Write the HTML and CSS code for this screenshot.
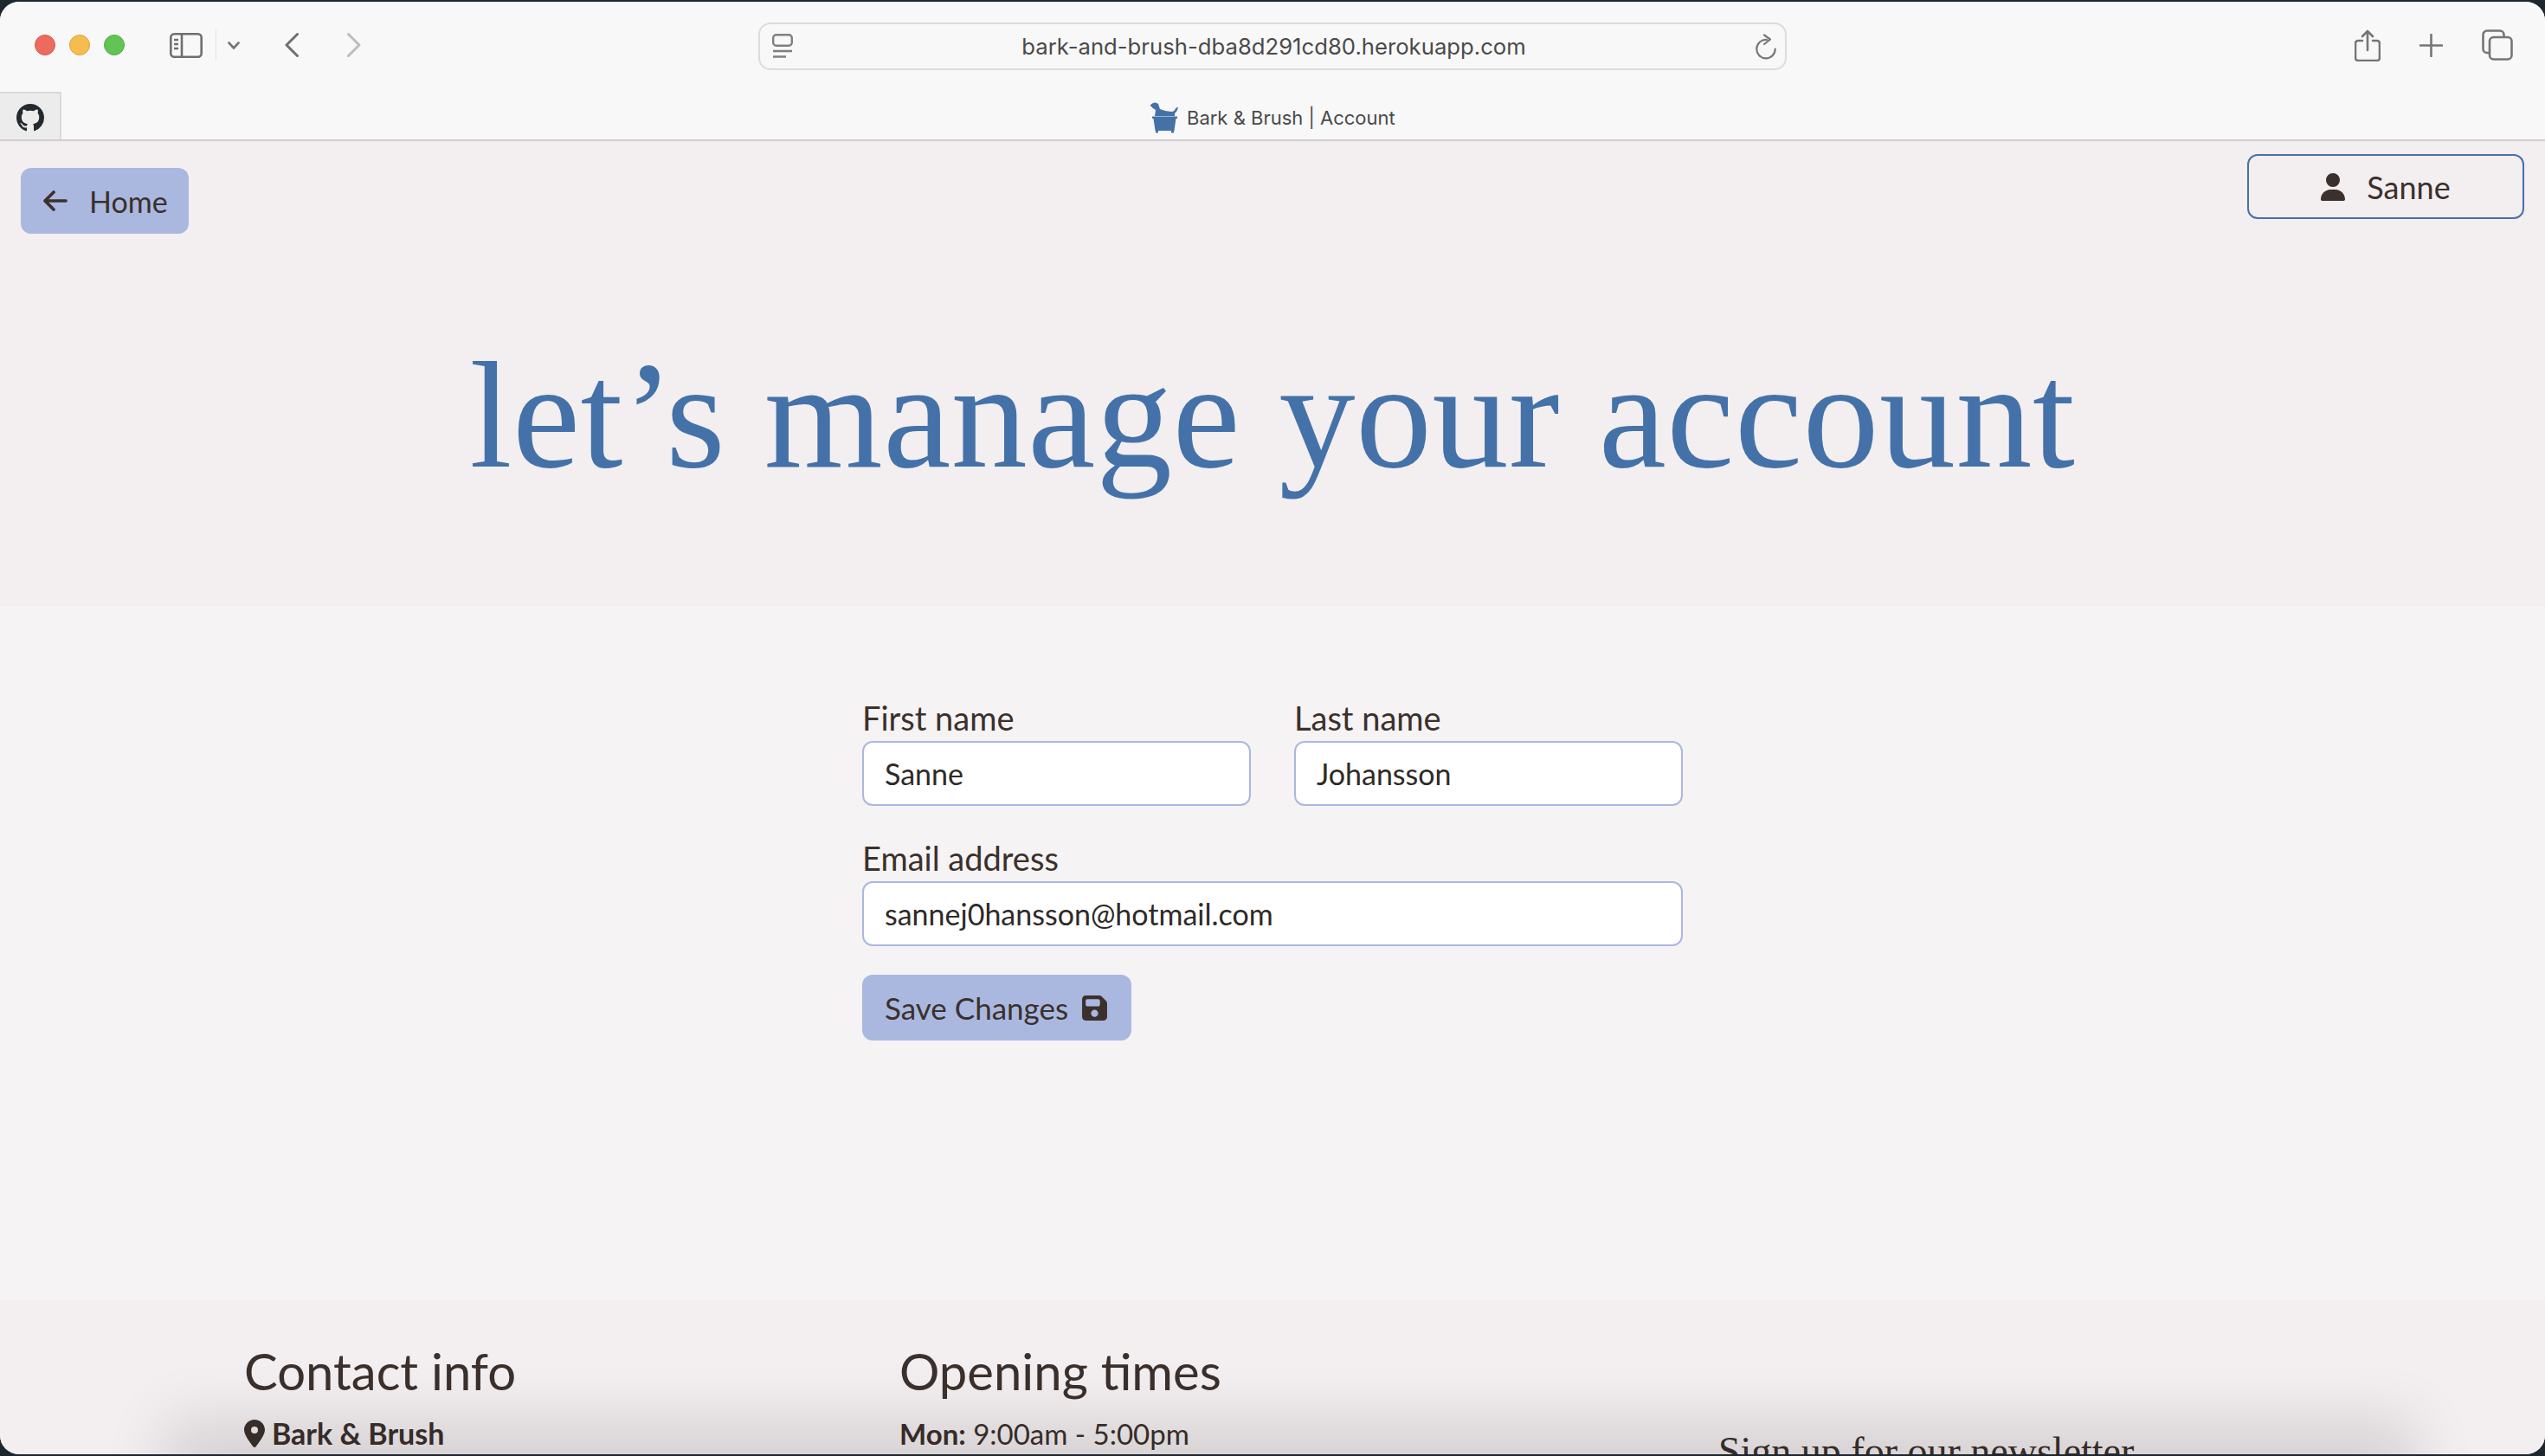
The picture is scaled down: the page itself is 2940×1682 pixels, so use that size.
FILE: index.html
```html
<!DOCTYPE html>
<html lang="en">

<head>
    <meta charset="UTF-8" />
    <title>Bark &amp; Brush | Account</title>
    <link rel="stylesheet" href="styles.css">
</head>

<body>
    <div class="window">

        <header class="chrome">
            <div class="toolbar">
                <div class="lights">
                    <span class="light red"></span>
                    <span class="light yellow"></span>
                    <span class="light green"></span>
                </div>
                <svg class="ico sidebar-ico" viewBox="0 0 38 29" fill="none" stroke="#6f6f6f" stroke-width="2.6">
                    <rect x="1.3" y="1.3" width="35.4" height="26.4" rx="4" />
                    <path d="M14 1.3v26.4M5 8h5M5 13h5M5 18h5" />
                </svg>
                <span class="divider"></span>
                <svg class="ico chevron-ico" viewBox="0 0 14 9" fill="none" stroke="#777" stroke-width="2.6" stroke-linecap="round" stroke-linejoin="round">
                    <path d="M1.5 1.5 7 7.5l5.5-6" />
                </svg>
                <svg class="ico back-ico" viewBox="0 0 16 28" fill="none" stroke="#6f6f6f" stroke-width="3" stroke-linecap="round" stroke-linejoin="round">
                    <path d="M14.5 1.5 2 14l12.5 12.5" />
                </svg>
                <svg class="ico forward-ico" viewBox="0 0 16 28" fill="none" stroke="#bdbdbd" stroke-width="3" stroke-linecap="round" stroke-linejoin="round">
                    <path d="M1.5 1.5 14 14 1.5 26.5" />
                </svg>

                <div class="urlbar">
                    <svg class="ico reader-ico" viewBox="0 0 24 28" fill="none" stroke="#808080" stroke-width="2.4">
                        <rect x="1.2" y="1.2" width="21.6" height="12.6" rx="3.5" />
                        <path d="M1 20h22M1 26.5h15" />
                    </svg>
                    <span class="url">bark-and-brush-dba8d291cd80.herokuapp.com</span>
                    <svg class="ico reload-ico" viewBox="14 8 32 32" fill="none" stroke="#777" stroke-width="2.2" stroke-linecap="round" stroke-linejoin="round">
                        <path d="M31 17A10.7 10.7 0 1 0 40.7 27.5" />
                        <path d="M28 11.5 35 16.5 28 22" />
                    </svg>
                </div>

                <div class="toolbar-right">
                    <svg class="ico share-ico" viewBox="0 0 30 37" fill="none" stroke="#757575" stroke-width="2.6" stroke-linecap="round" stroke-linejoin="round">
                        <path d="M9 13H4a3 3 0 0 0-3 3v17a3 3 0 0 0 3 3h22a3 3 0 0 0 3-3V16a3 3 0 0 0-3-3h-5" />
                        <path d="M15 24V2M9 8l6-6 6 6" />
                    </svg>
                    <svg class="ico plus-ico" viewBox="0 0 27 27" fill="none" stroke="#757575" stroke-width="2.6" stroke-linecap="round">
                        <path d="M13.5 1v25M1 13.5h25" />
                    </svg>
                    <svg class="ico tabs-ico" viewBox="0 0 36 36" fill="none" stroke="#757575" stroke-width="2.6">
                        <path d="M8 27H6a4.5 4.5 0 0 1-4.5-4.5V6A4.5 4.5 0 0 1 6 1.5h15A4.5 4.5 0 0 1 25.5 6v2" />
                        <rect x="9" y="9" width="25.5" height="25.5" rx="4.5" />
                    </svg>
                </div>
            </div>

            <div class="tabrow">
                <div class="pinned-tab">
                    <svg class="github-ico" viewBox="0 0 16 16" fill="#24292f">
                        <path d="M8 0C3.58 0 0 3.58 0 8c0 3.54 2.29 6.53 5.47 7.59.4.07.55-.17.55-.38 0-.19-.01-.82-.01-1.49-2.01.37-2.53-.49-2.69-.94-.09-.23-.48-.94-.82-1.13-.28-.15-.68-.52-.01-.53.63-.01 1.08.58 1.23.82.72 1.21 1.87.87 2.33.66.07-.52.28-.87.51-1.07-1.78-.2-3.64-.89-3.64-3.95 0-.87.31-1.59.82-2.15-.08-.2-.36-1.02.08-2.12 0 0 .67-.21 2.2.82.64-.18 1.32-.27 2-.27.68 0 1.36.09 2 .27 1.53-1.04 2.2-.82 2.2-.82.44 1.1.16 1.92.08 2.12.51.56.82 1.27.82 2.15 0 3.07-1.87 3.75-3.65 3.95.29.25.54.73.54 1.48 0 1.07-.01 1.93-.01 2.2 0 .21.15.46.55.38A8.013 8.013 0 0016 8c0-4.42-3.58-8-8-8z" />
                    </svg>
                </div>
                <div class="tab-title">
                    <svg class="favicon" viewBox="8 5 34 37" fill="#4472a8">
                        <path d="M8.5 9.5 12 7Q15 5.5 18 8L20 14Q27 17 33 17 37 17 38 13L41 11.5Q40 17 37 19V22H14L15 15Q11 13 8.5 9.5Z" />
                        <path d="M11 22.5H40V25H38.5L36.5 39H14.5L12.5 25H11Z" />
                        <path d="M15 39H18V41.5H15ZM33 39H36V41.5H33Z" />
                    </svg>
                    <span>Bark &amp; Brush | Account</span>
                </div>
            </div>
        </header>

        <section class="hero">
            <div class="hero-nav">
                <a class="btn btn-home" href="#">
                    <svg class="arrow-ico" viewBox="0 0 28 24" fill="none" stroke="#3b302c" stroke-width="3.6" stroke-linecap="round" stroke-linejoin="round">
                        <path d="M26 12H2M12 2 2 12l10 10" />
                    </svg>
                    Home
                </a>
                <a class="btn btn-user" href="#">
                    <svg class="user-ico" viewBox="0 0 448 512" fill="#3b302c">
                        <path d="M224 256A128 128 0 1 0 224 0a128 128 0 1 0 0 256zm-45.7 48C79.8 304 0 383.8 0 482.3C0 498.7 13.3 512 29.7 512H418.3c16.4 0 29.7-13.3 29.7-29.7C448 383.8 368.2 304 269.7 304H178.3z" />
                    </svg>
                    Sanne
                </a>
            </div>
            <h1>let’s manage your account</h1>
        </section>

        <main class="content">
            <form class="account-form">
                <div class="field">
                    <label for="first">First name</label>
                    <input type="text" id="first" value="Sanne" />
                </div>
                <div class="field">
                    <label for="last">Last name</label>
                    <input type="text" id="last" value="Johansson" />
                </div>
                <div class="field wide">
                    <label for="email">Email address</label>
                    <input type="text" id="email" value="sannej0hansson@hotmail.com" />
                </div>
                <button class="btn btn-save" type="button">
                    Save Changes
                    <svg class="save-ico" viewBox="0 0 448 512" fill="#3b302c">
                        <path d="M64 32C28.7 32 0 60.7 0 96V416c0 35.3 28.7 64 64 64H384c35.3 0 64-28.7 64-64V173.3c0-17-6.7-33.3-18.7-45.3L352 50.7C340 38.7 323.7 32 306.7 32H64zm0 96c0-17.7 14.3-32 32-32H288c17.7 0 32 14.3 32 32v64c0 17.7-14.3 32-32 32H96c-17.7 0-32-14.3-32-32V128zM224 288a64 64 0 1 1 0 128 64 64 0 1 1 0-128z" />
                    </svg>
                </button>
            </form>
        </main>

        <footer class="footer">
            <div class="footer-col">
                <h2>Contact info</h2>
                <p class="strong">
                    <svg class="pin-ico" viewBox="0 0 384 512" fill="#3b302c">
                        <path d="M215.7 499.2C267 435 384 279.4 384 192C384 86 298 0 192 0S0 86 0 192c0 87.4 117 243 168.3 307.2c12.3 15.3 35.1 15.3 47.4 0zM192 128a64 64 0 1 1 0 128 64 64 0 1 1 0-128z" />
                    </svg>
                    Bark &amp; Brush
                </p>
            </div>
            <div class="footer-col">
                <h2>Opening times</h2>
                <p class="hours"><strong>Mon:</strong> 9:00am - 5:00pm</p>
            </div>
            <div class="footer-col newsletter">
                <h3>Sign up for our newsletter</h3>
            </div>
        </footer>

        <div class="dock-shadow"></div>
    </div>
</body>

</html>
```

FILE: styles.css
```css
* {
    box-sizing: border-box;
}

html,
body {
    height: 100%;
    margin: 0;
}

body {
    background-color: #1d2730;
    font-family: "Lato", sans-serif;
    color: #3b302c;
    overflow: hidden;
}

.window {
    position: relative;
    height: 1678px;
    margin-top: 2px;
    border-radius: 22px;
    overflow: hidden;
    display: flex;
    flex-direction: column;
    background-color: #f3eef0;
}

/* browser bar */
.chrome {
    height: 161px;
    flex-shrink: 0;
    background-color: #f8f8f8;
    border-bottom: 2px solid #d2cecf;
    display: flex;
    flex-direction: column;
}

.toolbar {
    height: 104px;
    display: flex;
    align-items: center;
    padding-bottom: 4px;
    padding-left: 40px;
}

.ico {
    display: block;
    flex-shrink: 0;
}

.lights {
    display: flex;
    gap: 16px;
}

.light {
    width: 24px;
    height: 24px;
    border-radius: 50%;
}

.red {
    background-color: #ee6a5f;
    border: 1px solid #d9584f;
}

.yellow {
    background-color: #f5bd4f;
    border: 1px solid #dca23c;
}

.green {
    background-color: #61c454;
    border: 1px solid #52ad45;
}

.sidebar-ico {
    width: 38px;
    height: 29px;
    margin-left: 52px;
}

.divider {
    width: 1px;
    height: 36px;
    background-color: #e2e2e2;
    margin-left: 15px;
}

.chevron-ico {
    width: 14px;
    height: 9px;
    margin-left: 13px;
}

.back-ico {
    width: 16px;
    height: 28px;
    margin-left: 52px;
}

.forward-ico {
    width: 16px;
    height: 28px;
    margin-left: 56px;
}

.urlbar {
    width: 1188px;
    height: 55px;
    margin-left: 459px;
    margin-top: 2px;
    border: 2px solid #dcdcdc;
    border-radius: 14px;
    display: flex;
    align-items: center;
    justify-content: space-between;
    padding: 0 6px 0 14px;
}

.reader-ico {
    width: 24px;
    height: 28px;
}

.url {
    font-family: "Inter", sans-serif;
    font-size: 25.7px;
    color: #4a4a4a;
    margin-left: 3px;
}

.reload-ico {
    width: 32px;
    height: 32px;
}

.toolbar-right {
    display: flex;
    align-items: center;
    margin-left: 656px;
    gap: 45px;
}

.share-ico {
    width: 30px;
    height: 37px;
}

.plus-ico {
    width: 27px;
    height: 27px;
}

.tabs-ico {
    width: 36px;
    height: 36px;
}

.tabrow {
    flex: 1;
    display: flex;
    position: relative;
}

.pinned-tab {
    width: 71px;
    background-color: #ececec;
    border-top: 2px solid #dadada;
    border-right: 2px solid #dadada;
    display: flex;
    align-items: center;
    justify-content: center;
    padding-top: 2px;
}

.github-ico {
    width: 32px;
    height: 32px;
}

.tab-title {
    position: absolute;
    left: 1328px;
    top: 11px;
    display: flex;
    align-items: center;
    gap: 9px;
    font-family: "Inter", sans-serif;
    font-size: 22px;
    color: #4a4a4a;
}

.favicon {
    width: 34px;
    height: 37px;
}

/* hero */
.hero {
    height: 538px;
    flex-shrink: 0;
    background-color: #f3eef0;
}

.hero-nav {
    display: flex;
    justify-content: space-between;
    align-items: flex-start;
    padding: 15px 24px 0;
}

.btn {
    display: inline-flex;
    align-items: center;
    font-family: inherit;
    color: #3b302c;
    text-decoration: none;
    border-radius: 12px;
    border: none;
    font-size: 36px;
}

.btn-home {
    width: 194px;
    height: 76px;
    margin-top: 16px;
    padding-left: 26px;
    gap: 25px;
    background-color: #aab8e0;
    font-size: 34px;
}

.arrow-ico {
    width: 28px;
    height: 24px;
}

.btn-user {
    width: 320px;
    height: 75px;
    justify-content: center;
    gap: 25px;
    border: 2px solid #4472a8;
}

.user-ico {
    width: 28px;
    height: 32px;
}

h1 {
    margin: 0;
    margin-top: 105px;
    text-align: center;
    font-family: "Liberation Serif", serif;
    font-weight: 400;
    font-size: 176px;
    line-height: 210px;
    letter-spacing: 0.5px;
    color: #4472a8;
}

/* form */
.content {
    height: 801px;
    flex-shrink: 0;
    background-color: #f5f3f4;
    padding-top: 101px;
}

.account-form {
    width: 948px;
    margin: 0 auto;
    display: grid;
    grid-template-columns: 1fr 1fr;
    column-gap: 50px;
    row-gap: 33px;
}

.field label {
    display: block;
    font-size: 38px;
    line-height: 54px;
}

.field input {
    display: block;
    width: 100%;
    height: 75px;
    padding: 0 24px;
    font-family: inherit;
    font-size: 34px;
    color: #2f2a28;
    background-color: #fff;
    border: 2px solid #aab8e0;
    border-radius: 12px;
}

.wide {
    grid-column: 1 / 3;
}

.btn-save {
    grid-column: 1 / 3;
    justify-self: start;
    width: 311px;
    height: 76px;
    padding-left: 26px;
    gap: 16px;
    background-color: #aab8e0;
    font-size: 35px;
}

.save-ico {
    width: 29px;
    height: 33px;
}

/* footer */
.footer {
    flex: 1;
    display: grid;
    grid-template-columns: 757px 946px 1fr;
    padding: 50px 0 0 282px;
    background-color: #f3eef0;
}

.footer h2 {
    margin: 0;
    font-size: 58px;
    font-weight: 400;
    line-height: 64px;
}

.footer p {
    margin: 18px 0 0;
    font-size: 34px;
    line-height: 44px;
}

.footer .hours {
    font-size: 33px;
}

.strong {
    font-weight: 700;
    display: flex;
    align-items: center;
    gap: 8px;
}

.pin-ico {
    width: 24px;
    height: 32px;
}

.newsletter h3 {
    margin: 100px 0 0;
    font-family: "Liberation Serif", serif;
    font-weight: 400;
    font-size: 46px;
    line-height: 50px;
}

/* dock shadow falling on the bottom of the window */
.dock-shadow {
    position: absolute;
    left: 230px;
    right: 190px;
    bottom: -40px;
    height: 40px;
    box-shadow: 0 0 70px 40px rgba(0, 0, 0, 0.12);
    pointer-events: none;
}
```
